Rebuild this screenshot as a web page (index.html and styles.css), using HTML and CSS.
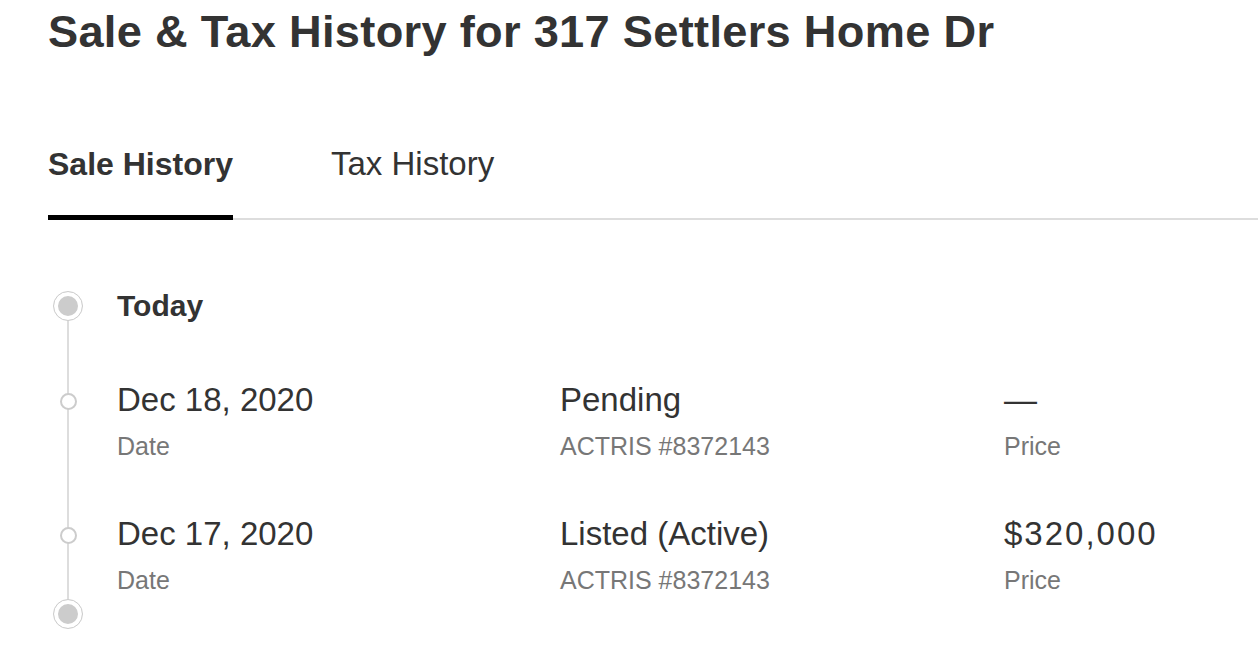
FILE: index.html
```html
<!DOCTYPE html>
<html>
<head>
<meta charset="utf-8">
<link rel="stylesheet" href="styles.css">
</head>
<body>
<div class="page">
  <h1 class="title">Sale &amp; Tax History for 317 Settlers Home Dr</h1>
  <div class="tabs">
    <div class="tab active">Sale History</div>
    <div class="tab">Tax History</div>
  </div>
  <div class="timeline">
    <div class="row row-today">
      <div class="marker"><span class="dot big"></span></div>
      <div class="today">Today</div>
    </div>
    <div class="row event">
      <div class="marker"><span class="dot small"></span></div>
      <div class="cols">
        <div class="col c1"><div class="val">Dec 18, 2020</div><div class="lbl">Date</div></div>
        <div class="col c2"><div class="val">Pending</div><div class="lbl">ACTRIS #8372143</div></div>
        <div class="col c3"><div class="val">—</div><div class="lbl">Price</div></div>
      </div>
    </div>
    <div class="row event">
      <div class="marker"><span class="dot small"></span></div>
      <div class="cols">
        <div class="col c1"><div class="val">Dec 17, 2020</div><div class="lbl">Date</div></div>
        <div class="col c2"><div class="val">Listed (Active)</div><div class="lbl">ACTRIS #8372143</div></div>
        <div class="col c3"><div class="val price">$320,000</div><div class="lbl">Price</div></div>
      </div>
    </div>
    <div class="row row-end">
      <div class="marker"><span class="dot big"></span></div>
    </div>
  </div>
</div>
</body>
</html>
```
FILE: styles.css
```css
html, body {
  margin: 0;
  padding: 0;
  background: #fff;
}
body {
  font-family: "Liberation Sans", Arial, sans-serif;
  color: #333;
  overflow: hidden;
}
.page {
  padding-left: 48px;
}
.title {
  margin: 0;
  padding-top: 4px;
  font-size: 45.2px;
  font-weight: 700;
  line-height: 56px;
  color: #333;
  letter-spacing: 0.3px;
}
.tabs {
  display: flex;
  align-items: flex-end;
  margin-top: 84px;
  border-bottom: 2px solid #ddd;
}
.tab {
  font-size: 33px;
  line-height: 40px;
  padding-bottom: 34px;
  color: #333;
}
.tab.active {
  font-size: 32px;
  font-weight: 700;
  border-bottom: 5px solid #000;
  padding-bottom: 31px;
  margin-bottom: -2px;
}
.tab + .tab {
  margin-left: 98px;
}
.timeline {
  position: relative;
  margin-top: 70px;
}
.timeline::before {
  content: "";
  position: absolute;
  left: 19px;
  top: 16px;
  bottom: 16px;
  width: 2px;
  background: #ddd;
}
.row {
  display: flex;
  position: relative;
}
.marker {
  flex: none;
  display: flex;
  justify-content: center;
  width: 40px;
  margin-right: 29px;
}
.dot {
  display: block;
  box-sizing: border-box;
  border-radius: 50%;
  position: relative;
  z-index: 1;
  background: #fff;
}
.dot.big {
  width: 30px;
  height: 30px;
  margin-top: 1px;
  border: 1px solid #ccc;
  box-shadow: inset 0 0 0 4px #fff, inset 0 0 0 20px #ccc;
}
.dot.small {
  width: 17px;
  height: 17px;
  border: 2px solid #ccc;
  margin-top: 13px;
}
.row-today {
  height: 90px;
}
.today {
  font-size: 30px;
  font-weight: 700;
  line-height: 32px;
}
.event {
  height: 134px;
}
.cols {
  display: flex;
}
.col.c1 { width: 443px; }
.col.c2 { width: 444px; }
.val {
  font-size: 33px;
  line-height: 40px;
  color: #333;
}
.val.price {
  letter-spacing: 2px;
}
.lbl {
  font-size: 25px;
  line-height: 30px;
  margin-top: 11px;
  color: #777;
}
.row-end {
  margin-top: -50px;
}
```
